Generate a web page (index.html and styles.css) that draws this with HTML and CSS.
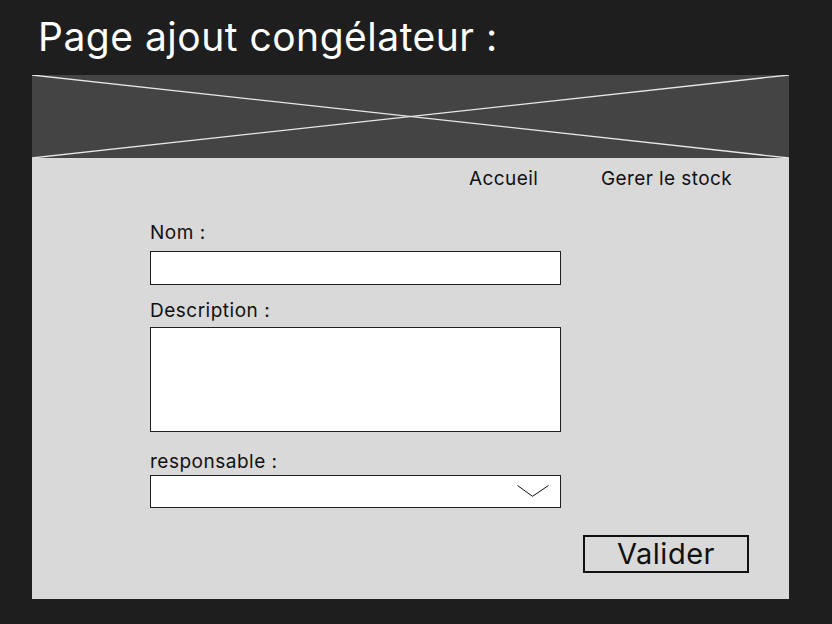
FILE: index.html
```html
<!DOCTYPE html>
<html lang="fr">
<head>
<meta charset="utf-8">
<title>Page ajout congélateur</title>
<link rel="stylesheet" href="styles.css">
</head>
<body>
  <h1 class="title">Page ajout congélateur :</h1>
  <div class="frame">
    <div class="banner">
      <svg class="banner-x" width="757" height="83" viewBox="0 0 757 83">
        <line x1="0" y1="0" x2="757" y2="83" />
        <line x1="0" y1="83" x2="757" y2="0" />
      </svg>
    </div>
    <div class="content">
      <nav class="nav">
        <a class="nav-item nav-home">Accueil</a>
        <a class="nav-item">Gerer le stock</a>
      </nav>
      <form class="form">
        <div class="label label-nom">Nom :</div>
        <div class="input input-nom"></div>
        <div class="label label-desc">Description :</div>
        <div class="input textarea"></div>
        <div class="label label-resp">responsable :</div>
        <div class="input select">
          <svg class="chevron" width="32" height="12" viewBox="0 0 32 12">
            <polyline points="0.5,0.5 15.5,11.3 31.5,0.5" />
          </svg>
        </div>
        <div class="actions">
          <div class="button">Valider</div>
        </div>
      </form>
    </div>
  </div>
</body>
</html>
```

FILE: styles.css
```css
* {
  box-sizing: border-box;
}

html, body {
  margin: 0;
  padding: 0;
  background: #1e1e1e;
  width: 832px;
  height: 624px;
  overflow: hidden;
  font-family: Inter, "Noto Sans", sans-serif;
}

.title {
  margin: 0;
  padding: 14px 0 0 38px;
  height: 60px;
  font-size: 39px;
  line-height: 46px;
  letter-spacing: 0.5px;
  font-weight: 400;
  color: #ffffff;
}

.frame {
  margin: 15px 0 0 32px;
  width: 757px;
  height: 524px;
  display: flex;
  flex-direction: column;
}

.banner {
  height: 83px;
  background: #444444;
  display: flex;
}

.banner-x line {
  stroke: #e8e8e8;
  stroke-width: 1.3;
}

.content {
  flex: 1;
  background: #d9d9d9;
  padding-top: 10px;
  color: #111111;
}

.nav {
  display: flex;
  padding-left: 437px;
  height: 22px;
  font-size: 19px;
  line-height: 22px;
  letter-spacing: 0.4px;
}

.nav-item {
  color: #111111;
}

.nav-home {
  width: 132px;
}

.form {
  padding-left: 118px;
  display: flex;
  flex-direction: column;
  align-items: flex-start;
}

.label {
  font-size: 19px;
  line-height: 22px;
  height: 22px;
  letter-spacing: 0.5px;
}

.label-nom { margin-top: 32px; }
.label-desc { margin-top: 15px; }
.label-resp { margin-top: 19px; }

.input {
  width: 411px;
  background: #ffffff;
  border: 1px solid #1f1f1f;
}

.input-nom {
  margin-top: 7px;
  height: 34px;
}

.textarea {
  margin-top: 5px;
  height: 105px;
}

.select {
  margin-top: 2px;
  height: 33px;
  display: flex;
  align-items: flex-start;
  justify-content: flex-end;
  padding: 9px 11px 0 0;
}

.chevron polyline {
  fill: none;
  stroke: #111111;
  stroke-width: 1;
}

.actions {
  width: 599px;
  display: flex;
  justify-content: flex-end;
  margin-top: 27px;
}

.button {
  width: 166px;
  height: 38px;
  border: 2px solid #111111;
  font-size: 29px;
  line-height: 34px;
  letter-spacing: 0.5px;
  text-align: center;
  color: #111111;
}
```
